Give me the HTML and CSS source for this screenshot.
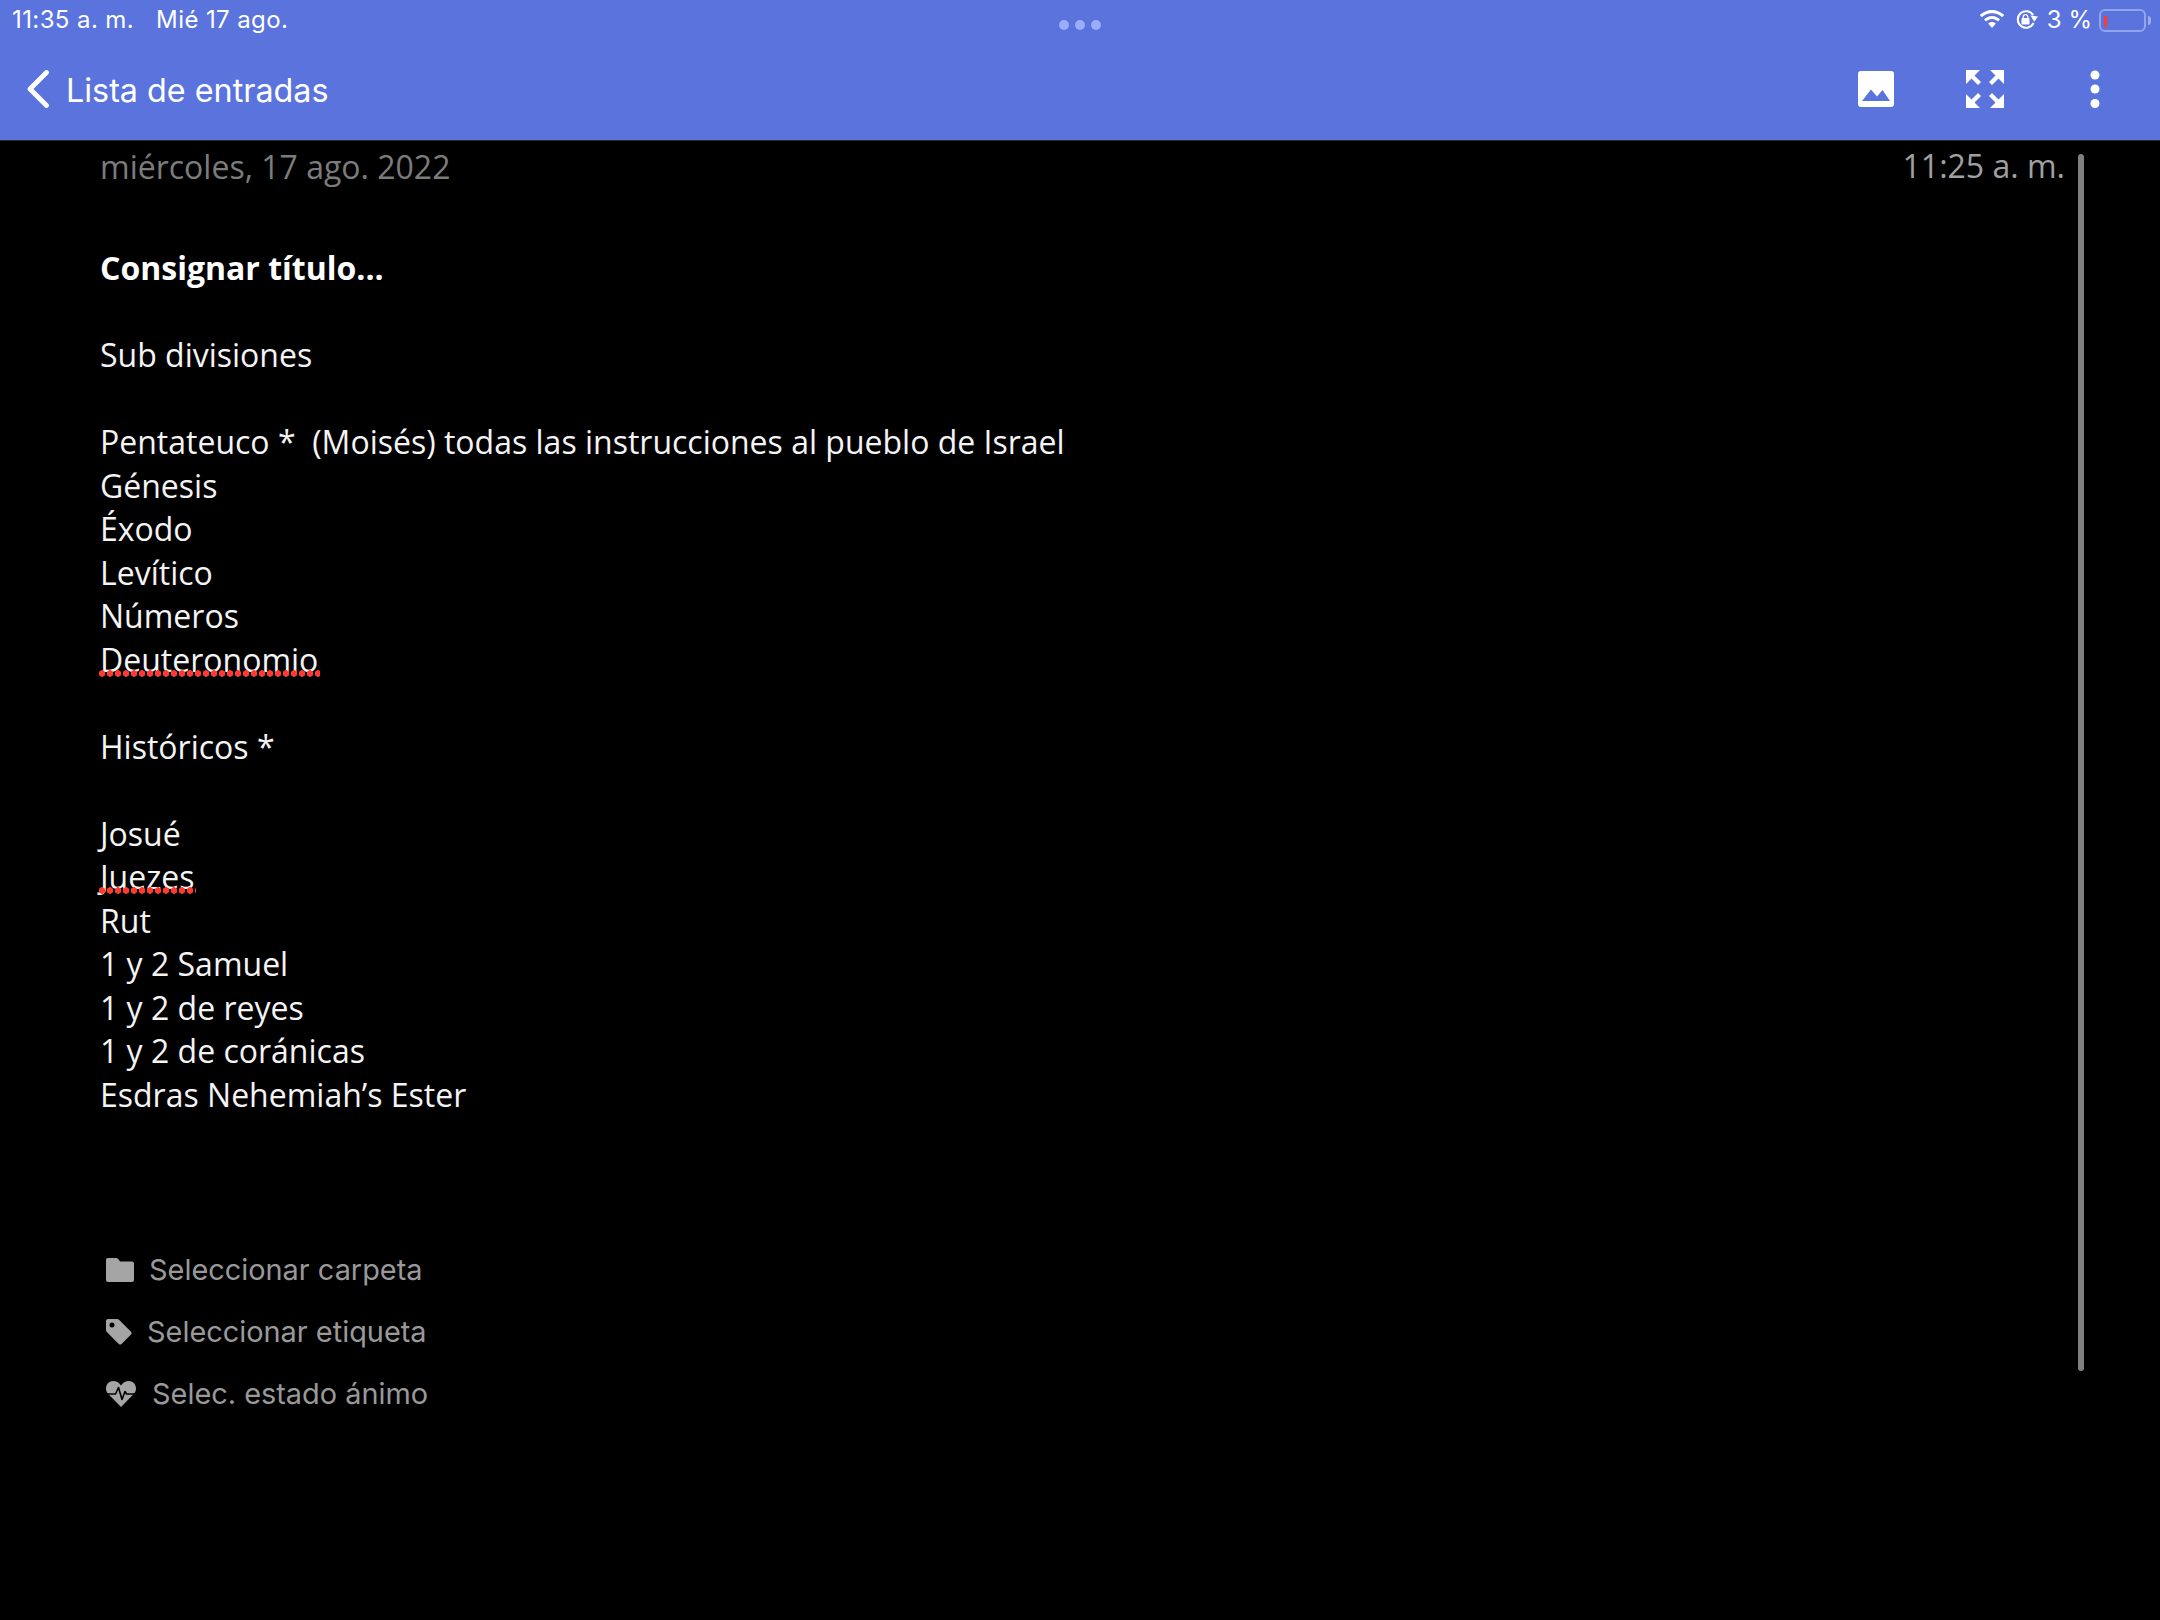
FILE: index.html
```html
<!DOCTYPE html>
<html lang="es">
<head>
<meta charset="utf-8">
<title>Lista de entradas</title>
<link rel="stylesheet" href="styles.css">
</head>
<body>
<div class="screen">
  <header class="appbar">
    <div class="status">
      <div class="status-left"><span>11:35 a. m.</span><span>Mié 17 ago.</span></div>
      <div class="status-right">
        <svg class="wifi" viewBox="0 0 28 20"><path d="M14 3.200c3.900 0 7.500 1.500 10.200 4l2-2.100C23 2 18.700 0 14 0S5 2 1.800 5.100l2 2.100c2.700-2.500 6.300-4 10.200-4z"/><path d="M14 9c2.300 0 4.400.9 6 2.400l2-2.100C19.900 7.300 17.100 6 14 6S8.100 7.300 6 9.300l2 2.100C9.600 9.900 11.700 9 14 9z"/><path d="M14 12c-1.500 0-2.900.6-3.900 1.600L14 18l3.900-4.400C16.900 12.600 15.500 12 14 12z"/></svg>
        <svg class="rotlock" viewBox="0 0 22 19"><path d="M17.200 5.200A8.300 8.300 0 1 0 17.600 13" fill="none" stroke="#fff" stroke-width="2"/><path d="M14.500 5.500l7.500 1-3.800 5.300z"/><rect x="5.500" y="8" width="8" height="6.500" rx="1"/><path d="M7.200 8.500V7a2.300 2.300 0 0 1 4.600 0v1.500" fill="none" stroke="#fff" stroke-width="1.300"/></svg>
        <span class="pct">3 %</span>
        <div class="battery"><div class="battery-body"><i class="battery-level"></i></div><i class="battery-cap"></i></div>
      </div>
    </div>
    <i class="grabber"><b></b><b></b><b></b></i>
    <nav class="nav">
      <div class="nav-left">
        <svg class="back" viewBox="0 0 24 38"><path d="M19.500 2.500L3 19l16.500 16.500" fill="none" stroke="#fff" stroke-width="4.800" stroke-linecap="round" stroke-linejoin="round"/></svg>
        <span class="nav-title">Lista de entradas</span>
      </div>
      <div class="nav-actions">
        <svg class="ic-image" viewBox="0 0 36 36"><path fill-rule="evenodd" d="M3 0h30a3 3 0 0 1 3 3v30a3 3 0 0 1-3 3H3a3 3 0 0 1-3-3V3a3 3 0 0 1 3-3zM4 30h28l-7.500-11-5.500 6.500-3-3.500-3-3.500z"/></svg>
        <svg class="ic-expand" viewBox="0 0 38 38"><path d="M0 0h14L8.500 5.500 15 12l-3 3-6.500-6.500L0 14z"/><path d="M38 0H24l5.500 5.500L23 12l3 3 6.500-6.500L38 14z"/><path d="M0 38h14l-5.500-5.500L15 26l-3-3-6.500 6.500L0 24z"/><path d="M38 38H24l5.500-5.500L23 26l3-3 6.500 6.500L38 24z"/></svg>
        <svg class="ic-more" viewBox="0 0 10 38"><circle cx="5" cy="5" r="4.500"/><circle cx="5" cy="19" r="4.500"/><circle cx="5" cy="33.500" r="4.500"/></svg>
      </div>
    </nav>
  </header>
  <main class="entry">
    <div class="meta"><span class="date">miércoles, 17 ago. 2022</span><span class="time">11:25 a. m.</span></div>
    <h1 class="title">Consignar título...</h1>
    <div class="body">
      <p>&nbsp;</p>
      <p>Sub divisiones</p>
      <p>&nbsp;</p>
      <p>Pentateuco *&nbsp; (Moisés) todas las instrucciones al pueblo de Israel</p>
      <p>Génesis</p>
      <p>Éxodo</p>
      <p>Levítico</p>
      <p>Números</p>
      <p><span class="misspelled">Deuteronomio</span></p>
      <p>&nbsp;</p>
      <p>Históricos *</p>
      <p>&nbsp;</p>
      <p>Josué</p>
      <p><span class="misspelled">Juezes</span></p>
      <p>Rut</p>
      <p>1 y 2 Samuel</p>
      <p>1 y 2 de reyes</p>
      <p>1 y 2 de coránicas</p>
      <p>Esdras Nehemiah’s Ester</p>
    </div>
    <ul class="selectors">
      <li class="sel sel-folder">
        <svg class="sel-ic" viewBox="0 0 28 24"><path d="M2 0h8c1.500 0 2.300.8 3 2l1 1.500h12a2 2 0 0 1 2 2V22a2 2 0 0 1-2 2H2a2 2 0 0 1-2-2V2a2 2 0 0 1 2-2z"/></svg>
        <span>Seleccionar carpeta</span>
      </li>
      <li class="sel sel-tag">
        <svg class="sel-ic" viewBox="0 0 26 26"><path fill-rule="evenodd" d="M2 0h9c.8 0 1.500.3 2 .8l12 12c.8.800.8 2 0 2.800l-9.400 9.400c-.8.800-2 .800-2.800 0l-12-12c-.5-.5-.8-1.200-.8-2V2a2 2 0 0 1 2-2zM6 3.500a2.500 2.500 0 1 0 0 5 2.500 2.500 0 0 0 0-5z"/></svg>
        <span>Seleccionar etiqueta</span>
      </li>
      <li class="sel sel-mood">
        <svg class="sel-ic" viewBox="0 0 30 26"><path d="M15 4.500C12.500 1 10 0 7.500 0 3 0 0 3.500 0 7.500c0 2 .7 3.800 2 5.300L15 26l13-13.200c1.300-1.500 2-3.300 2-5.300C30 3.500 27 0 22.500 0 20 0 17.500 1 15 4.500z"/><path class="ecg" d="M0 13h9.500l3-6.500 3.500 12 3-8 1.500 2.500H30"/></svg>
        <span>Selec. estado ánimo</span>
      </li>
    </ul>
  </main>
  <i class="scrollbar"></i>
</div>
</body>
</html>
```
FILE: styles.css
```css
* { box-sizing: border-box; }
html, body { margin: 0; padding: 0; background: #000; }
.screen { position: relative; width: 2160px; height: 1620px; overflow: hidden; background: #000; }

.appbar { position: relative; height: 141px; background: #5a73dd; border-bottom: 1px solid #2b2b2b; color: #fff; font-family: Inter, "Liberation Sans", sans-serif; }
.status { display: flex; justify-content: space-between; padding: 7px 9px 0 12px; height: 40px; font-size: 24px; line-height: 26px; }
.status-left { display: flex; gap: 22px; letter-spacing: .4px; }
.status-right { display: flex; align-items: flex-start; }
.wifi { width: 28px; height: 20px; fill: #fff; margin-top: 3px; }
.rotlock { width: 22px; height: 19px; fill: #fff; margin: 3px 0 0 10px; }
.pct { margin-left: 9px; }
.battery { display: flex; align-items: center; margin: 2px 0 0 7px; }
.battery-body { width: 47px; height: 23px; border: 2px solid rgba(255,255,255,.35); border-radius: 6px; padding: 5px 0 0 3px; }
.battery-level { display: block; width: 3px; height: 11px; background: #ff3b30; }
.battery-cap { width: 3px; height: 9px; margin-left: 2px; background: rgba(255,255,255,.4); border-radius: 0 3px 3px 0; }
.grabber { position: absolute; top: 20px; left: 1059px; display: flex; gap: 6px; }
.grabber b { width: 10px; height: 10px; border-radius: 50%; background: #98aefc; }

.nav { display: flex; justify-content: space-between; align-items: center; height: 100px; padding: 0 0 0 27px; margin-top: -1px; }
.nav-left { display: flex; align-items: center; gap: 15px; }
.back { width: 24px; height: 38px; }
.nav-title { font-size: 32.300px; line-height: 40px; padding-top: 3px; }
.nav-actions { display: flex; align-items: center; }
.nav-actions svg { fill: #fff; }
.ic-image { width: 36px; height: 36px; }
.ic-expand { width: 38px; height: 38px; margin-left: 72px; }
.ic-more { width: 10px; height: 38px; margin: 0 60px 0 86px; }

.entry { padding: 4px 0 0 100px; font-family: "Open Sans", "Liberation Sans", sans-serif; font-size: 32px; font-weight: 400; line-height: 43.500px; color: #f4f4f4; }
.meta { display: flex; justify-content: space-between; padding-right: 95px; height: 44.500px; }
.date { color: #7c7c7c; }
.time { color: #a0a0a0; position: relative; top: -1.500px; }
.title { margin: 56.500px 0 0; font-size: 32px; line-height: 43.500px; font-weight: 700; color: #fff; }
.body p { margin: 0; height: 43.500px; }
.misspelled { display: inline-block; position: relative; }
.misspelled::after { content: ""; position: absolute; left: -2px; right: -2px; top: 32px; height: 7px; background: radial-gradient(circle at 4px 3.500px, #ff3b30 3px, transparent 3.500px) 0 0 / 8px 7px repeat-x; }

.selectors { list-style: none; margin: 123px 0 0; padding: 0; font-family: Inter, "Liberation Sans", sans-serif; font-size: 28.900px; font-weight: 400; color: #999; }
.sel { display: flex; align-items: center; height: 62px; }
.sel-ic { fill: #a5a5a5; height: 24px; width: 28px; margin-left: 6px; }
.sel-folder span { margin-left: 15px; }
.sel-tag .sel-ic { width: 26px; height: 26px; }
.sel-tag span { margin-left: 15px; }
.sel-mood .sel-ic { width: 30px; height: 26px; }
.sel-mood span { margin-left: 16px; }
.ecg { fill: none; stroke: #000; stroke-width: 1.600px; stroke-linejoin: round; }

.scrollbar { position: absolute; left: 2078px; top: 154px; width: 6px; height: 1217px; background: #808080; border-radius: 3px; }
```
